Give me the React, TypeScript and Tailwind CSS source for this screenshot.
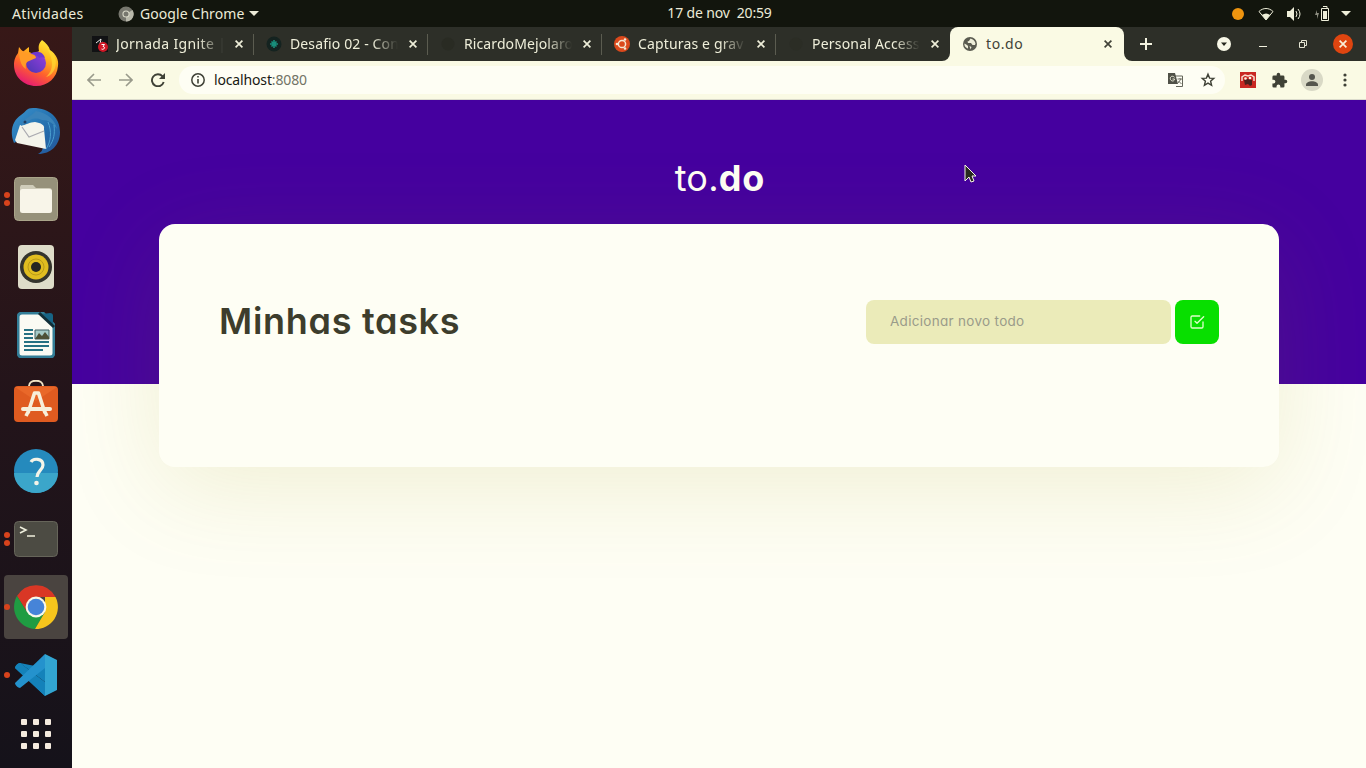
import type { ReactNode } from "react";

const ui = "font-['Noto_Sans','Open_Sans',sans-serif]";
const display = "font-['Inter',sans-serif] [font-feature-settings:'cv11'_1,'ss03'_1]";

function CloseIcon() {
  return (
    <svg width="8" height="8" viewBox="0 0 8 8" className="shrink-0" fill="none" stroke="currentColor" strokeWidth="1.7">
      <path d="M.6.6l6.8 6.8M7.4.6L.6 7.4" />
    </svg>
  );
}

function Tab({ icon, title, textClass }: { icon: ReactNode; title: string; textClass: string }) {
  return (
    <div className="flex h-[34px] w-[174px] shrink-0 items-center pl-3 text-[#eeeed9]">
      <div className="flex size-4 shrink-0 items-center justify-center">{icon}</div>
      <div className={`ml-2 w-[108px] shrink-0 whitespace-nowrap text-[14px] leading-5 [mask-image:linear-gradient(to_right,black_76%,transparent_100%)] ${textClass}`}>{title}</div>
      <div className="ml-[11px] flex shrink-0"><CloseIcon /></div>
      <div className="ml-[10px] h-[21px] w-px shrink-0 bg-[#5b5c50]" />
    </div>
  );
}

function DockItem({ children, dots = 0, active = false }: { children: ReactNode; dots?: number; active?: boolean }) {
  return (
    <div className={`relative flex h-16 w-16 shrink-0 items-center justify-center rounded ${active ? "bg-[#4a4440]" : ""}`}>
      {children}
      {dots > 0 && (
        <div className="absolute left-0 top-0 flex h-full flex-col items-center justify-center gap-[2px]">
          {Array.from({ length: dots }, (_, i) => <span key={i} className="size-[6px] rounded-full bg-[#d8431c]" />)}
        </div>
      )}
    </div>
  );
}

function Firefox() {
  return (
    <svg width="46" height="48" viewBox="0 0 46 48">
      <defs>
        <linearGradient id="fx" x1=".8" y1="0" x2=".3" y2="1"><stop stopColor="#fff13b" /><stop offset=".35" stopColor="#ffb51e" /><stop offset=".65" stopColor="#ff622c" /><stop offset="1" stopColor="#e41777" /></linearGradient>
        <linearGradient id="fxc" x1="1" y1="0" x2="0" y2="1"><stop stopColor="#993fe0" /><stop offset="1" stopColor="#4936b2" /></linearGradient>
      </defs>
      <path d="M29 1c4 3 7 6 8 10 6 4 9 10 8 16-1 12-10 20-22 20S1 38 1 26c0-6 2-9 4-12l1-6 4 5c2-2 4-4 6-5v5l5 2 5-3c-1-5 0-8 3-11Z" fill="url(#fx)" />
      <circle cx="23" cy="24" r="10" fill="url(#fxc)" />
      <path d="M6 11c7 1 7 4 12 4 3 0 5 2 5 4l-7 3c-3 1-4 4-3 8-4-2-7-8-7-19Z" fill="#ff9b26" />
      <path d="M17 15c6-4 13-3 15 4-2-1-4-1-6 0-2-3-4-4-9-4Z" fill="#6e37cf" />
      <path d="M30 4c8 9 14 25 3 34 9-2 13-15 7-24-3-2-7-7-10-10Z" fill="#ffdc34" opacity=".65" />
    </svg>
  );
}

function Thunderbird() {
  return (
    <svg width="50" height="48" viewBox="0 0 50 48">
      <defs><linearGradient id="tb" x1="0" y1="0" x2="1" y2="1"><stop stopColor="#3a92cd" /><stop offset=".5" stopColor="#2572b0" /><stop offset="1" stopColor="#24559a" /></linearGradient></defs>
      <path d="M10 8C16 4 15 1 22 1c17 0 27 10 27 24 0 13-9 22-22 22 4-2 5-5 5-8L10 32 3 36C-2 24 2 13 10 8Z" fill="url(#tb)" />
      <path d="m4 33 5-15c3 2 9-3 15-3 6 1 10 3 9 7l2 20L6 36Z" fill="#f4f4eb" />
      <path d="m11 20 7 10 15-6" fill="none" stroke="#aaaab0" strokeWidth="1.2" />
      <path d="M10 19c2-8 10-9 15-15 12 2 19 9 21 18-4-6-9-9-15-9-7-3-11-1-13 1-3 2-5 3-8 5Z" fill="#3a83b9" />
      <circle cx="14" cy="15" r="1.5" fill="#203e62" />
      <path d="M37 15c4 9 3 20-2 27M43 18c1 9 0 15-5 22" fill="none" stroke="#4ba0d1" strokeWidth="1" />
    </svg>
  );
}

function Writer() {
  return (
    <svg width="38" height="46" viewBox="0 0 38 46">
      <path d="M5 1h21l11 12v28a4 4 0 0 1-4 4H5a4 4 0 0 1-4-4V5a4 4 0 0 1 4-4Z" fill="#fafaf3" stroke="#327d97" strokeWidth="3" />
      <path d="M25 2 36 13V4a3 3 0 0 0-3-3Z" fill="#176486" /><path d="m22 1 15 14" stroke="#112e38" strokeWidth="3" />
      <path d="M7 18h9M7 22h9M7 26h9M7 30h25M7 34h25M7 38h19" stroke="#257082" strokeWidth="1.8" />
      <path d="M18 18h14v9H18Z" fill="#a5cac8" stroke="#3b5d60" /><path d="m18 27 4-6 3 3 3-4 4 5v2Z" fill="#4c5037" />
    </svg>
  );
}

function Software() {
  return (
    <svg width="46" height="46" viewBox="0 0 46 46">
      <path d="M16 7V6c0-7 14-7 14 0v1" fill="none" stroke="#f0e3c4" strokeWidth="2" />
      <rect x="1" y="6" width="44" height="36" rx="4" fill="#df5b20" />
      <path d="M2 7h42L23 21Z" fill="#f07332" opacity=".55" />
      <path d="m15 33 6.500-20h4L32 33" fill="none" stroke="#f7efda" strokeWidth="3.6" strokeLinejoin="round" />
      <path d="M10 29h27" stroke="#f7efda" strokeWidth="4" strokeLinecap="round" />
      <path d="M15 32l-2 4M32 32l2 4" stroke="#f7efda" strokeWidth="3.600" />
    </svg>
  );
}

function Chrome() {
  return (
    <svg width="46" height="46" viewBox="0 0 46 46">
      <path d="M4 12A22 22 0 0 1 42.5 13H23l-9 15Z" fill="#d93725" />
      <path d="M4 12a22 22 0 0 0 18 33l10-17-18 0Z" fill="#1f9c42" />
      <path d="M42.5 13A22 22 0 0 1 22 45l10-17V13Z" fill="#f6c51c" />
      <circle cx="23" cy="23" r="10.4" fill="#f9f8e9" /><circle cx="23" cy="23" r="8.3" fill="#4684d8" />
    </svg>
  );
}

function Dock() {
  return (
    <aside className="flex w-[72px] shrink-0 flex-col items-center gap-1 bg-linear-to-b from-[#371817] via-[#23141a] to-[#15121a] pt-1">
      <DockItem><Firefox /></DockItem>
      <DockItem><Thunderbird /></DockItem>
      <DockItem dots={2}>
        <svg width="44" height="44"><rect x=".5" y=".5" width="43" height="43" rx="4" fill="#96917a" stroke="#aaa58a" /><path d="M7 8h12l3 3h13a3 3 0 0 1 3 3v20H6V10Z" fill="#cfccb9" /><rect x="6" y="12" width="32" height="24" rx="2.5" fill="#f8f5e9" /></svg>
      </DockItem>
      <DockItem>
        <svg width="38" height="46"><rect x="1" y="1" width="36" height="44" rx="4" fill="#dedcc9" /><circle cx="19" cy="23" r="16" fill="#34342d" /><circle cx="19" cy="23" r="12.5" fill="#e0bd20" /><circle cx="19" cy="23" r="8" fill="none" stroke="#b89a1a" /><circle cx="19" cy="23" r="5" fill="#252622" /></svg>
      </DockItem>
      <DockItem><Writer /></DockItem>
      <DockItem><Software /></DockItem>
      <DockItem>
        <svg width="44" height="44"><circle cx="22" cy="22" r="22" fill="#258abd" /><path d="M0 24a22 20 0 0 0 44 0Z" fill="#3ba6ca" /><path d="M17 13c2-4 12-4 12 3 0 5-6 6-6 12" fill="none" stroke="#f4f4e8" strokeWidth="3.2" /><circle cx="22.5" cy="34" r="2.3" fill="#f4f4e8" /></svg>
      </DockItem>
      <DockItem dots={2}>
        <svg width="44" height="36"><rect x=".5" y=".5" width="43" height="35" rx="4" fill="#4c4b43" stroke="#66655a" /><path d="m6 6 6 3-6 3M13 15h8" fill="none" stroke="#efefdd" strokeWidth="1.6" /></svg>
      </DockItem>
      <DockItem dots={1} active><Chrome /></DockItem>
      <DockItem dots={1}>
        <svg width="44" height="44" viewBox="0 0 44 44">
          <path d="M31 15v14L6 10c-2 0-5 3-5 5l30 28V31L6 10Z" fill="#1482ba" />
          <path d="M6 10c-2 0-5 3-5 5l30 28V29Z" fill="#1482ba" />
          <path d="M31 1v14L6 35c-2 0-5-3-5-5Z" fill="#2492cd" />
          <path d="m31 1 12 6v30l-12 6Z" fill="#32a5d2" />
        </svg>
      </DockItem>
      <div className="flex h-[46px] w-16 items-center justify-center">
        <div className="grid grid-cols-3 gap-[6px]">{Array.from({ length: 9 }, (_, i) => <span key={i} className="size-[6px] rounded-[1px] bg-[#f5ebdf]" />)}</div>
      </div>
    </aside>
  );
}

function Globe() {
  return <svg width="14" height="14" viewBox="0 0 14 14"><circle cx="7" cy="7" r="7" fill="#5a5b50" /><path d="M1.500 6.500 4 8l1 1v2.500C3 11 1 9 1.500 6.500ZM7.500 1.500 6 4 4.500 4.500 5 6h3l1.500 2H12l.5-1.500C12 4 10 2 7.500 1.500ZM6.500 9l2 1-1 2.500Z" fill="#eeeed9" /></svg>;
}

function TopBar() {
  return (
    <header className={`grid h-[27px] grid-cols-3 items-center bg-[#12150d] text-[14px] text-[#ecebd8] ${ui}`}>
      <div className="flex items-center pl-3 leading-[26px]">
        <span className="w-[106px] tracking-[0.35px]">Atividades</span>
        <svg width="16" height="16" viewBox="0 0 16 16"><circle cx="8" cy="8" r="7.500" fill="#77776e" /><path d="M8 8 14.500 4A7.500 7.500 0 0 1 8 15.500Z" fill="#b8b8aa" /><circle cx="8" cy="8" r="3.600" fill="#dadac9" /><circle cx="8" cy="8" r="2.500" fill="#77776e" /></svg>
        <span className="ml-[6px] whitespace-nowrap tracking-[0.08px]">Google Chrome</span>
        <svg className="ml-[5px]" width="10" height="5"><path d="M0 0h10L5 5Z" fill="#ecebd8" /></svg>
      </div>
      <div className="-mt-px whitespace-pre pl-[73px] text-center leading-[26px] tracking-[-0.15px]">17 de nov  20:59</div>
      <div className="flex items-center justify-end pr-[15px]">
        <span className="size-3 rounded-full bg-[#ee940f]" />
        <svg className="ml-[14px]" width="16" height="14" viewBox="0 0 16 14"><path d="M1 4.500C5 .5 11 .5 15 4.500L8 13Z" fill="none" stroke="#eeeed9" /><path d="M3.800 8c3-2 5.500-2 8.400 0L8 13Z" fill="#eeeed9" /></svg>
        <svg className="ml-[13px]" width="16" height="14" viewBox="0 0 16 14"><path d="M0 4h3l4-4v14l-4-4H0Z" fill="#eeeed9" /><path d="M9 4q2 3 0 6M11 2q4 5 0 10" fill="none" stroke="#eeeed9" /></svg>
        <svg className="ml-[12px]" width="15" height="16" viewBox="0 0 15 16"><path d="M2 4 0 9h2v4l2-6H2Z" fill="#8c8d80" /><path d="M6.500 2.500h7v12h-7ZM8 .5h4v2" fill="none" stroke="#eeeed9" /><path d="M8 5h4v8H8Z" fill="#eeeed9" /></svg>
        <svg className="ml-[11px]" width="10" height="5"><path d="M0 0h10L5 5Z" fill="#eeeed9" /></svg>
      </div>
    </header>
  );
}

function TabBar() {
  return (
    <div className={`flex h-[34px] shrink-0 bg-[#2d2f28] pl-2 ${ui}`}>
      <Tab title="Jornada Ignite |" textClass="tracking-[0.35px]" icon={<svg width="16" height="16"><path d="M0 0h16v16H0Z" fill="#111214" /><path d="m4 7 5-4-1 5 3-2" stroke="#eee" fill="none" /><circle cx="11" cy="11" r="5" fill="#d01826" /><path d="M9.500 8.500h3L11 10.500c3 0 1 4-1.500 2.500" fill="none" stroke="#fff" /></svg>} />
      <Tab title="Desafio 02 - Con" textClass="tracking-[0.12px]" icon={<svg width="16" height="16"><circle cx="8" cy="8" r="7.500" fill="#142320" /><path d="M8 4v8M4 8h8M5.500 5.500l5 5M10.500 5.500l-5 5" stroke="#188e7b" strokeWidth="1.600" /></svg>} />
      <Tab title="RicardoMejolaro" textClass="tracking-[0.1px]" icon={<svg width="16" height="16"><circle cx="8" cy="8" r="6.500" fill="#292b23" /></svg>} />
      <Tab title="Capturas e grav" textClass="tracking-[0.15px]" icon={<svg width="16" height="16"><circle cx="8" cy="8" r="8" fill="#db491c" /><circle cx="8" cy="8" r="3.600" fill="none" stroke="#f5e7d2" strokeWidth="1.500" /><circle cx="3" cy="8" r="1.300" fill="#f5e7d2" /><circle cx="11" cy="3.500" r="1.300" fill="#f5e7d2" /><circle cx="11" cy="12.500" r="1.300" fill="#f5e7d2" /></svg>} />
      <div className="h-full w-[174px] bg-[#fafae4]"><div className="h-full rounded-br-lg bg-[#2d2f28] [&>div>div:last-child]:hidden"><Tab title="Personal Access" textClass="tracking-[0.2px]" icon={<svg width="16" height="16"><circle cx="8" cy="8" r="6.500" fill="#2b2d25" /></svg>} /></div></div>
      <div className="h-full w-[174px] shrink-0 bg-[#2d2f28]">
        <div className="flex h-full items-center rounded-t-lg bg-[#fafae4] pl-[13px] text-[14px] text-[#414238]">
          <Globe /><span className="ml-[9px] w-[118px] leading-5 tracking-[0.6px]">to.do</span><CloseIcon />
        </div>
      </div>
      <div className="flex h-full flex-1 bg-[#fafae4]">
        <div className="flex h-full flex-1 items-center rounded-bl-lg bg-[#2d2f28] pl-4">
          <svg width="12" height="12"><path d="M6 0v12M0 6h12" stroke="#f2f2df" strokeWidth="2" /></svg>
          <svg className="ml-[65px]" width="14" height="14"><circle cx="7" cy="7" r="7" fill="#f8f8e7" /><path d="M4 5.500h6L7 9Z" fill="#25271e" /></svg>
          <svg className="ml-[28px]" width="8" height="8"><path d="M0 6.500h8" stroke="#f2f2df" /></svg>
          <svg className="ml-[32px]" width="8" height="8"><path d="M.5 2.500h5v5h-5ZM2.500 2V.5h5v5H6" fill="none" stroke="#e4e4d2" /></svg>
          <div className="ml-[26px] flex size-5 items-center justify-center rounded-full bg-[#df4510] text-[#faf0d9]"><CloseIcon /></div>
        </div>
      </div>
    </div>
  );
}

function Toolbar() {
  return (
    <div className="flex h-[39px] shrink-0 items-center border-b border-[#dbdbcc] bg-[#fafae4] pl-[15px] text-[#3f4136]">
      <svg width="14" height="14" viewBox="0 0 14 14" fill="none" stroke="#999a8b" strokeWidth="1.600"><path d="M14 7H1M7 1 1 7l6 6" /></svg>
      <svg className="ml-[18px]" width="14" height="14" viewBox="0 0 14 14" fill="none" stroke="#999a8b" strokeWidth="1.600"><path d="M0 7h13M7 1l6 6-6 6" /></svg>
      <svg className="ml-[18px]" width="14" height="14" viewBox="0 0 14 14"><path d="M11.500 3.300A6 6 0 1 0 12.700 9" fill="none" stroke="currentColor" strokeWidth="1.900" /><path d="M14 0v6H8Z" fill="currentColor" /></svg>
      <div className={`ml-[14px] flex h-7 w-[1046px] items-center rounded-full bg-[#fefef4] pl-3 text-[14px] ${ui}`}>
        <svg width="14" height="14"><circle cx="7" cy="7" r="6.200" fill="none" stroke="currentColor" strokeWidth="1.500" /><path d="M7 6v4.500M7 3v1.500" stroke="currentColor" strokeWidth="1.600" /></svg>
        <span className="ml-[9px] pb-px tracking-[-0.15px] text-[#181913]">localhost<span className="text-[#727365]">:8080</span></span>
        <div className="ml-auto flex items-center pr-[9px]">
          <svg width="15" height="14" viewBox="0 0 15 14"><path d="M6 3h8.500v10.500H8" fill="none" stroke="#65665a" /><path d="M0 0h7l3 11H0Z" fill="#505147" /><path d="M6.500 4.300C4 2 1.500 4 2.500 6.500S7 8 6.500 6H4.500" stroke="#eeeed9" fill="none" /><path d="M9.500 6H14M12 5v1M13 6l-3 4M10.500 8l3 3" stroke="#707164" /></svg>
          <svg className="ml-[17px]" width="16" height="16" viewBox="0 0 16 16"><path d="m8 2.200 1.600 3.900 4.200.3-3.200 2.800 1 4.100L8 11.100l-3.600 2.200 1-4.100-3.200-2.800 4.200-.3Z" fill="none" stroke="currentColor" strokeWidth="1.400" /></svg>
        </div>
      </div>
      <svg className="ml-[15px]" width="16" height="16"><path d="M0 0h16v16H0Z" fill="#c92822" /><path d="M2 9V5l3-2 3 1 3-1 3 2v4" fill="none" stroke="#f9ddd0" strokeWidth="1.500" /><path d="m4 8 3-1 5 1v5l-2 1-2-2-3 1Z" fill="#4c211c" /><circle cx="5.500" cy="6.500" r="1.300" fill="#fff4e3" /><circle cx="10" cy="6" r="1.300" fill="#fff4e3" /></svg>
      <svg className="ml-[15px]" width="17" height="17" viewBox="0 0 24 24"><path d="M20.500 11H19V7a2 2 0 0 0-2-2h-4V3.500a2.500 2.500 0 0 0-5 0V5H4a2 2 0 0 0-2 2v3.800h1.500a2.700 2.700 0 0 1 0 5.400H2V20a2 2 0 0 0 2 2h3.800v-1.500a2.700 2.700 0 0 1 5.400 0V22H17a2 2 0 0 0 2-2v-4h1.500a2.500 2.500 0 0 0 0-5Z" fill="currentColor" /></svg>
      <svg className="ml-[13px]" width="22" height="22"><circle cx="11" cy="11" r="11" fill="#d9d9c6" /><circle cx="11" cy="8" r="3" fill="#55564e" /><path d="M5 17v-1c0-5 12-5 12 0v1Z" fill="#55564e" /></svg>
      <svg className="ml-[20px]" width="4" height="14"><circle cx="2" cy="2" r="1.600" fill="currentColor" /><circle cx="2" cy="7" r="1.600" fill="currentColor" /><circle cx="2" cy="12" r="1.600" fill="currentColor" /></svg>
    </div>
  );
}

function TodoPage() {
  return (
    <main className="relative flex-1 overflow-hidden bg-[#fefef4]">
      <div className="flex h-[284px] justify-center bg-[#45009f] pt-[51px]">
        <div className={`h-14 whitespace-nowrap pl-0.5 text-[36px] leading-[54px] text-[#fefef4] ${display}`}><span className="font-normal tracking-[0.2px]">to.</span><span className="font-bold tracking-[0.9px]">do</span></div>
      </div>
      <section className="relative mx-[87px] -mt-40 flex h-[243px] items-start justify-between rounded-2xl bg-[#fefef4] px-[60px] pt-[76px] shadow-[0_20px_100px_rgba(150,140,0,0.13)]">
        <h1 className={`whitespace-nowrap text-[36px] font-semibold leading-[42px] tracking-[0.7px] text-[#3d3d2c] ${display}`}>Minhas tasks</h1>
        <div className="flex gap-1">
          <input aria-label="Adicionar novo todo" placeholder="Adicionar novo todo" className={`h-11 w-[305px] rounded-lg bg-[#ebebb9] px-6 pb-0.5 text-[13.5px] tracking-[0.3px] outline-none placeholder:text-[#9a9b8a] ${display}`} />
          <button aria-label="Adicionar" className="flex size-11 items-center justify-center rounded-lg bg-[#08df00] text-[#ddffc9]">
            <svg width="16" height="16" viewBox="0 0 24 24" fill="none" stroke="currentColor" strokeWidth="2" strokeLinecap="round" strokeLinejoin="round"><path d="m9 11 3 3L22 4M21 12v7a2 2 0 0 1-2 2H5a2 2 0 0 1-2-2V5a2 2 0 0 1 2-2h11" /></svg>
          </button>
        </div>
      </section>
      <svg className="absolute left-[892px] top-[64px]" width="13" height="20" viewBox="0 0 13 20"><path d="M1 1v16l4-4 2 5 3-1-2-5h4Z" fill="#27291f" stroke="#f5f5e2" /></svg>
    </main>
  );
}

export default function App() {
  return (
    <div className="flex h-screen w-screen flex-col overflow-hidden">
      <TopBar />
      <div className="flex min-h-0 flex-1">
        <Dock />
        <div className="flex min-w-0 flex-1 flex-col"><TabBar /><Toolbar /><TodoPage /></div>
      </div>
    </div>
  );
}
